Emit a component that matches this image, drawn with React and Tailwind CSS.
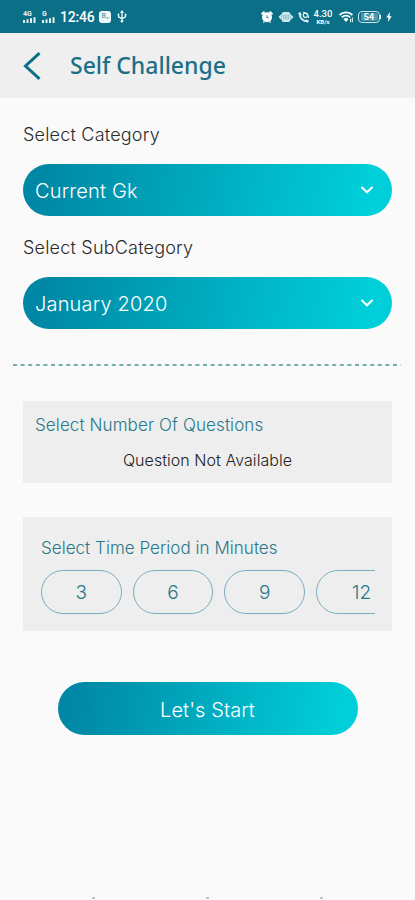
import { useState } from "react";

const categories = ["Current Gk"];
const subCategories = ["January 2020"];
const minutes = [3, 6, 9, 12];

const SignalIcon = ({ label, className }) => (
  <div className={`flex flex-col text-[#e6f3f6] ${className}`}>
    <span className="text-[7px] leading-[6px] font-bold">{label}</span>
    <svg viewBox="0 0 13 6" className="w-[13px] h-[6px]" fill="currentColor">
      <rect x="0" y="3" width="2" height="3" />
      <rect x="3.500" y="2.3" width="2" height="3.7" />
      <rect x="7" y="1.2" width="2" height="4.8" />
      <rect x="10.500" y="0.2" width="2" height="5.8" />
    </svg>
  </div>
);

const AlarmIcon = () => (
  <svg viewBox="0 0 12 12" className="w-3 h-3" fill="none" stroke="#fff">
    <circle cx="6" cy="6.2" r="5" fill="#fff" stroke="none" />
    <path d="M1.200 2.800 2.800 1.200M10.800 2.800 9.200 1.200" strokeWidth="2" strokeLinecap="round" />
    <path d="M6 4.200v2.500h1.600" stroke="#0a6f87" strokeWidth=".9" />
    <path d="M2.400 11.500l1-1M9.600 11.500l-1-1" strokeWidth="1.400" />
  </svg>
);

const VibrateIcon = () => (
  <svg viewBox="0 0 16 12" className="w-4 h-3" fill="#cfe9ef">
    <path d="M4 2.500Q4 1 5.500 1h5Q12 1 12 2.500L14 4.500 15.500 6 14 7.500 12 9.500Q12 11 10.500 11h-5Q4 11 4 9.500L2 7.500.5 6 2 4.500z" />
    <path d="M5.800 3.500v5M8 3.500v5M10.200 3.500v5" stroke="#5fa3b3" strokeWidth=".8" />
    <path d="M3.500 3.800v4.400M12.500 3.800v4.400" stroke="#5fa3b3" strokeWidth=".5" />
  </svg>
);

const CallIcon = () => (
  <svg viewBox="0 0 12 12" className="w-3 h-3" fill="none" stroke="#e0f1f5">
    <path d="M1.500 2.200C1.500 7 5 10.500 9.800 10.500" strokeWidth="1.700" />
    <path d="M1.200 1.500 2.800 4.400M7.600 9.200l2.800 1.500" strokeWidth="2.400" />
    <path d="M5 1.500a5.500 5.500 0 0 1 5.500 5.500" strokeWidth="1.300" />
    <circle cx="7.500" cy="4.200" r="2.200" strokeWidth="1.200" />
  </svg>
);

const WifiIcon = () => (
  <svg viewBox="0 0 15 12" className="w-[15px] h-3" fill="none" stroke="#fff">
    <path d="M.6 4a9 9 0 0 1 12.800 0" strokeWidth="1.900" />
    <path d="M2.800 6.400a6 6 0 0 1 8.400 0" strokeWidth="1.800" />
    <path d="M4.400 8 7 11l2.600-3a4 4 0 0 0-5.200 0z" fill="#fff" stroke="none" />
    <path d="M11.500 8v3.200M13.300 6.500v4.700" strokeWidth="1" />
  </svg>
);

const StatusBar = () => (
  <div className="flex h-[33px] items-center bg-[#0a6f87] text-white font-['Roboto',sans-serif]">
    <SignalIcon label="4G" className="ml-[23px]" />
    <SignalIcon label="G" className="ml-[6px]" />
    <span className="ml-[5px] w-[36px] text-[14px] leading-4 font-medium tracking-[-0.200px]">12:46</span>
    <span className="ml-[3px] flex h-[12px] w-[12px] items-center justify-center rounded-[3px] bg-[#eef7f9] text-[7px] font-bold text-[#6ba8b7]">
      B₂
    </span>
    <svg viewBox="0 0 10 13" className="ml-[6px] h-[13px] w-[10px]" fill="none" stroke="#fff">
      <path d="M5 2v9M1.500 4.500v2.300L5 8.800l3.500-2V4.500" strokeWidth="1.200" />
      <path d="M5 0 7 3H3z" fill="#fff" stroke="none" />
      <circle cx="5" cy="11.300" r="1.300" fill="#fff" stroke="none" />
      <circle cx="1.500" cy="4.500" r=".9" fill="#fff" stroke="none" />
      <path d="M7.700 3.700h1.700v1.700H7.700z" fill="#fff" stroke="none" />
    </svg>
    <div className="ml-auto mr-[23px] flex items-center">
      <AlarmIcon />
      <span className="w-[5px]" />
      <VibrateIcon />
      <span className="w-[4px]" />
      <CallIcon />
      <div className="ml-[3px] flex w-[20px] flex-col items-center">
        <span className="text-[9.500px] leading-[9px] font-medium">4.30</span>
        <span className="mt-[1px] text-[6px] leading-[6px] font-bold">KB/s</span>
      </div>
      <span className="w-[6px]" />
      <WifiIcon />
      <div className="ml-[4px] flex h-[12px] w-[22px] items-center justify-center rounded-[4px] border border-[#cfe6ec]">
        <span className="flex h-[8px] w-[17px] items-center justify-center rounded-[2px] bg-[#4e9aab] text-[9px] leading-[8px] font-bold">
          54
        </span>
      </div>
      <span className="h-[4px] w-[1px] bg-white" />
      <svg viewBox="0 0 6 10" className="ml-[5px] h-[10px] w-[6px]" fill="#fff">
        <path d="M4 0 .3 5.600h2.200L2 10l3.700-5.800H3.500z" />
      </svg>
    </div>
  </div>
);

const Header = () => (
  <div className="flex h-[65px] items-center bg-[#efefef]">
    <button type="button" aria-label="Back" className="ml-[23px]">
      <svg viewBox="0 0 18 28" className="h-[28px] w-[18px]" fill="none" stroke="#0a6f87">
        <path d="M16.500 1.200 2.500 14 16.500 26.800" strokeWidth="3" />
      </svg>
    </button>
    <h1 className="-mt-[1px] ml-[29px] text-[23px] leading-8 font-medium text-[#1b7087] font-['Noto_Sans',sans-serif]">
      Self Challenge
    </h1>
  </div>
);

const SelectField = ({ label, value }) => (
  <div className="mb-[17px]">
    <p className="text-[18px] leading-[26px] font-light tracking-[0.200px] text-[#2b2b2b]">{label}</p>
    <button
      type="button"
      className="mt-[16px] flex h-[52px] w-full items-center justify-between rounded-full bg-[linear-gradient(100deg,#0087a5_5%,#00ced8_92%)] pr-[18px] pl-[12px] text-white"
    >
      <span className="pt-[2px] text-[20px] font-light tracking-[0.170px]">{value}</span>
      <svg viewBox="0 0 14 10" className="h-[10px] w-[14px]" fill="none" stroke="#fff">
        <path d="M2 2.500 7 7.300 12 2.500" strokeWidth="2" strokeLinecap="round" />
      </svg>
    </button>
  </div>
);

export default function App() {
  const [time, setTime] = useState(null);

  return (
    <div className="flex h-[900px] w-full flex-col overflow-hidden bg-[#fafafa] font-['Inter',sans-serif]">
      <StatusBar />
      <Header />

      <div className="flex flex-col gap-[2px] px-[23px] pt-[24px]">
        <SelectField label="Select Category" value={categories[0]} />
        <SelectField label="Select SubCategory" value={subCategories[0]} />
      </div>

      <svg className="mt-[18px] ml-[13px] h-[2px] w-[388px]" fill="none">
        <path d="M0 1H388" stroke="#4a9792" strokeWidth="1.500" strokeDasharray="4 3.600" />
      </svg>

      <div className="mx-[23px] mt-[35px] h-[82px] bg-[#eeeeee] pt-[11px]">
        <p className="pl-[12px] text-[17px] leading-[26px] font-light tracking-[0.110px] text-[#27788a]">
          Select Number Of Questions
        </p>
        <p className="mt-[9px] text-center text-[16px] leading-[26px] font-light tracking-[0.050px] text-[#222]">
          Question Not Available
        </p>
      </div>

      <div className="mx-[23px] mt-[34px] h-[114px] bg-[#eeeeee] pt-[18px] pr-[17px] pl-[18px]">
        <p className="text-[17px] leading-[26px] font-light tracking-[0.040px] text-[#27788a]">
          Select Time Period in Minutes
        </p>
        <div className="mt-[9px] flex gap-[11px] overflow-hidden">
          {minutes.map((min) => (
            <button
              key={min}
              type="button"
              onClick={() => setTime(min)}
              aria-pressed={time === min}
              className="h-[44px] w-[80.700px] shrink-0 rounded-full border border-[#78aec0] pt-[2px] text-[19px] font-light text-[#27788a] last:w-[91px]"
            >
              {min}
            </button>
          ))}
        </div>
      </div>

      <button
        type="button"
        className="mx-auto mt-[51px] h-[53px] w-[300px] rounded-full bg-[linear-gradient(100deg,#0087a5_5%,#00ced8_92%)] pt-[2px] text-[20px] font-light tracking-[0.100px] text-white"
      >
        Let's Start
      </button>

      <div className="mt-auto flex justify-between pr-[92px] pb-[1px] pl-[92px]">
        <span className="h-[2px] w-[3px] bg-[#c4c4c4]" />
        <span className="h-[2px] w-[3px] bg-[#c4c4c4]" />
        <span className="h-[2px] w-[3px] bg-[#c4c4c4]" />
      </div>
    </div>
  );
}
